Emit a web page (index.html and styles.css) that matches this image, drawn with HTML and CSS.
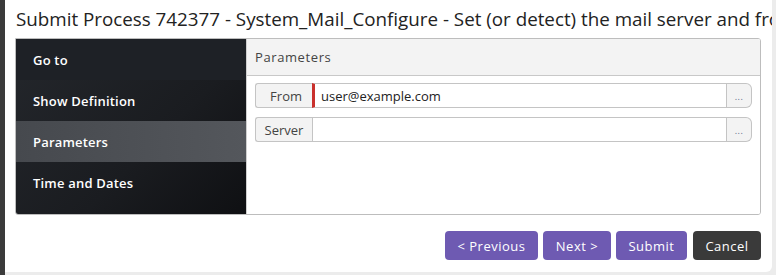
FILE: index.html
```html
<!DOCTYPE html>
<html>
<head>
<meta charset="utf-8">
<link rel="stylesheet" href="styles.css">
</head>
<body>
<div class="page">
  <div class="strip"></div>
  <div class="dialog">
    <h1 class="title">Submit Process 742377 - System_Mail_Configure - Set (or detect) the mail server and from address</h1>
    <div class="panel">
      <nav class="nav">
        <div class="nav-item first">Go to</div>
        <div class="nav-item">Show Definition</div>
        <div class="nav-item active">Parameters</div>
        <div class="nav-item">Time and Dates</div>
      </nav>
      <section class="content">
        <div class="content-head">Parameters</div>
        <div class="fields">
          <div class="field">
            <span class="label">From</span>
            <span class="input required">user@example.com</span>
            <span class="more">...</span>
          </div>
          <div class="field">
            <span class="label">Server</span>
            <span class="input"></span>
            <span class="more">...</span>
          </div>
        </div>
      </section>
    </div>
    <div class="actions">
      <button class="btn purple prev">&lt; Previous</button>
      <button class="btn purple next">Next &gt;</button>
      <button class="btn purple submit">Submit</button>
      <button class="btn dark cancel">Cancel</button>
    </div>
  </div>
</div>
</body>
</html>
```
FILE: styles.css
```css
html, body {
  margin: 0;
  padding: 0;
  background: #ececec;
}
body {
  font-family: "Open Sans", "Noto Sans", sans-serif;
  width: 776px;
  height: 275px;
  overflow: hidden;
}
.page {
  display: flex;
  height: 275px;
}
.strip {
  width: 5px;
  flex: none;
  background: #3b3b3b;
}
.dialog {
  flex: none;
  width: 767px;
  height: 272px;
  background: #fff;
  border-bottom-right-radius: 6px;
  overflow: hidden;
  padding-left: 10px;
  box-sizing: border-box;
}
.title {
  margin: 0;
  padding: 8px 0 0 1px;
  height: 30px;
  font-weight: 400;
  font-size: 18.8px;
  color: #222;
  white-space: nowrap;
  overflow: hidden;
  line-height: 22px;
}
.panel {
  display: flex;
  width: 746px;
  height: 177px;
  border: 1px solid #bdbdbd;
  border-radius: 0 3px 3px 3px;
  box-sizing: border-box;
  overflow: hidden;
}
.nav {
  width: 230px;
  flex: none;
  background: linear-gradient(135deg, #24272c 0%, #1a1c20 60%, #0f1013 100%);
  display: flex;
  flex-direction: column;
}
.nav-item {
  height: 41px;
  flex: none;
  display: flex;
  align-items: center;
  padding-left: 17px;
  color: #fff;
  font-size: 13px;
  font-weight: 600;
  letter-spacing: 0.2px;
}
.nav-item.first {
  height: 41px;
  background: #1e2126;
}
.nav-item.active {
  background: linear-gradient(90deg, #46494e, #54575c);
}
.content {
  flex: 1;
  background: #fff;
  border-left: 1px solid #cfcfcf;
}
.content-head {
  height: 36px;
  background: #f3f3f3;
  border-bottom: 1px solid #c8c8c8;
  display: flex;
  align-items: center;
  padding-left: 8px;
  font-size: 13px;
  color: #444;
  letter-spacing: 0.6px;
}
.fields {
  padding: 7px 8px 0 8px;
  display: flex;
  flex-direction: column;
  gap: 9px;
}
.field {
  display: flex;
  height: 25px;
  font-size: 13px;
}
.label {
  width: 57px;
  box-sizing: border-box;
  background: #f3f3f3;
  border: 1px solid #c4c4c4;
  border-right: none;
  border-radius: 3px 0 0 3px;
  display: flex;
  align-items: center;
  justify-content: flex-end;
  padding-right: 10px;
  color: #444;
}
.field:nth-child(2) .label {
  justify-content: center;
  padding-right: 0;
}
.input {
  flex: 1;
  box-sizing: border-box;
  border: 1px solid #c4c4c4;
  display: flex;
  align-items: center;
  padding-left: 8px;
  color: #222;
}
.input.required {
  border-left: 3px solid #c9302c;
  padding-left: 6px;
}
.more {
  width: 25px;
  box-sizing: border-box;
  background: #f3f3f3;
  border: 1px solid #c4c4c4;
  border-left: none;
  border-radius: 0 6px 6px 0;
  display: flex;
  align-items: flex-end;
  justify-content: center;
  padding-bottom: 6px;
  font-size: 9px;
  line-height: 9px;
  color: #5a6a8a;
  letter-spacing: 0.5px;
}
.actions {
  display: flex;
  justify-content: flex-end;
  gap: 5px;
  width: 746px;
  margin-top: 16px;
}
.btn {
  height: 29px;
  border: none;
  border-radius: 4px;
  color: #fff;
  font-family: "Open Sans", "Noto Sans", sans-serif;
  font-size: 13px;
  font-weight: 500;
  letter-spacing: 0.5px;
  padding: 0;
}
.purple { background: #6e5ab2; }
.dark { background: #3a3a3a; margin-left: 1px; }
.prev { width: 93px; }
.next { width: 68px; }
.submit { width: 71px; }
.cancel { width: 68px; }
```
